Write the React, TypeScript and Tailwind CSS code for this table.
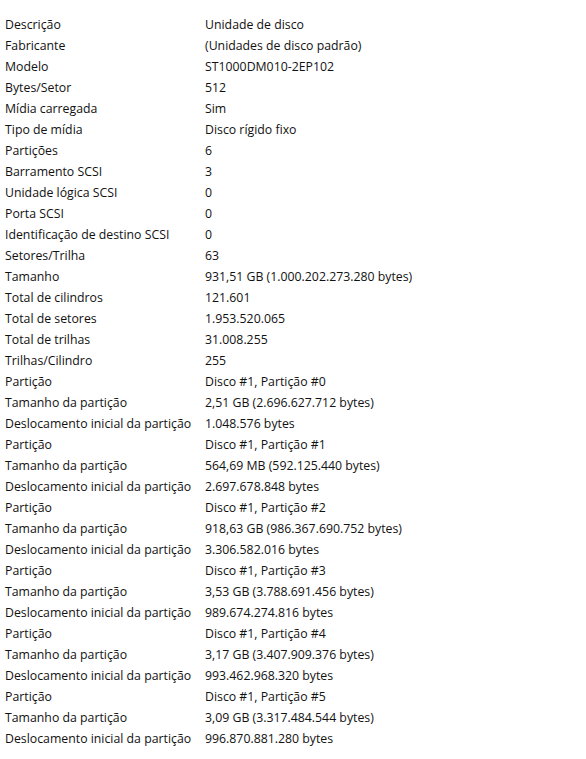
import React from "react";

const rows: [string, string][] = [
  ["Descrição", "Unidade de disco"],
  ["Fabricante", "(Unidades de disco padrão)"],
  ["Modelo", "ST1000DM010-2EP102"],
  ["Bytes/Setor", "512"],
  ["Mídia carregada", "Sim"],
  ["Tipo de mídia", "Disco rígido fixo"],
  ["Partições", "6"],
  ["Barramento SCSI", "3"],
  ["Unidade lógica SCSI", "0"],
  ["Porta SCSI", "0"],
  ["Identificação de destino SCSI", "0"],
  ["Setores/Trilha", "63"],
  ["Tamanho", "931,51 GB (1.000.202.273.280 bytes)"],
  ["Total de cilindros", "121.601"],
  ["Total de setores", "1.953.520.065"],
  ["Total de trilhas", "31.008.255"],
  ["Trilhas/Cilindro", "255"],
  ["Partição", "Disco #1, Partição #0"],
  ["Tamanho da partição", "2,51 GB (2.696.627.712 bytes)"],
  ["Deslocamento inicial da partição", "1.048.576 bytes"],
  ["Partição", "Disco #1, Partição #1"],
  ["Tamanho da partição", "564,69 MB (592.125.440 bytes)"],
  ["Deslocamento inicial da partição", "2.697.678.848 bytes"],
  ["Partição", "Disco #1, Partição #2"],
  ["Tamanho da partição", "918,63 GB (986.367.690.752 bytes)"],
  ["Deslocamento inicial da partição", "3.306.582.016 bytes"],
  ["Partição", "Disco #1, Partição #3"],
  ["Tamanho da partição", "3,53 GB (3.788.691.456 bytes)"],
  ["Deslocamento inicial da partição", "989.674.274.816 bytes"],
  ["Partição", "Disco #1, Partição #4"],
  ["Tamanho da partição", "3,17 GB (3.407.909.376 bytes)"],
  ["Deslocamento inicial da partição", "993.462.968.320 bytes"],
  ["Partição", "Disco #1, Partição #5"],
  ["Tamanho da partição", "3,09 GB (3.317.484.544 bytes)"],
  ["Deslocamento inicial da partição", "996.870.881.280 bytes"],
];

export default function App() {
  return (
    <div className="w-[586px] h-[759px] bg-white pt-[14px] pl-[5px] text-[12.3px] leading-[21px] text-[#111] [font-family:'Open_Sans',sans-serif]">
      {rows.map(([k, v], i) => (
        <div key={i} className="flex">
          {/* label column, values start at x=205 unless label is longer */}
          <span className="min-w-[200px] shrink-0 pr-[4px] whitespace-nowrap">{k}</span>
          <span className="whitespace-nowrap">{v}</span>
        </div>
      ))}
    </div>
  );
}
